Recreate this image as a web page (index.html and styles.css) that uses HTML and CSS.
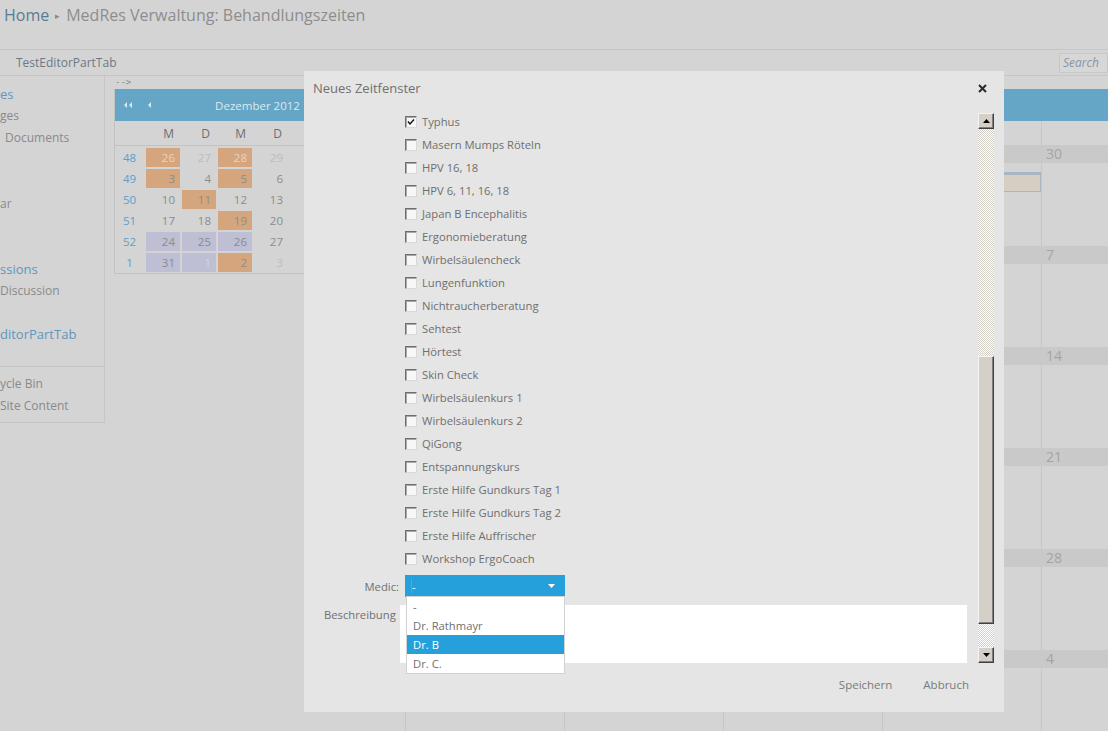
FILE: index.html
```html
<!DOCTYPE html>
<html lang="de">
<head>
<meta charset="utf-8">
<title>MedRes Verwaltung: Behandlungszeiten</title>
<link rel="stylesheet" href="styles.css">
</head>
<body>
<div class="page">
  <header class="topbar">
    <h1 class="crumb"><span class="crumb-home">Home</span><span class="crumb-sep">&#9656;</span><span class="crumb-page">MedRes Verwaltung: Behandlungszeiten</span></h1>
  </header>
  <div class="tabbar">
    <span class="tab">TestEditorPartTab</span>
    <div class="search">Search</div>
  </div>
  <div class="main">
    <nav class="quicklaunch">
      <div class="ql-head first">es</div>
      <div class="ql-item">ges</div>
      <div class="ql-item indent">Documents</div>
      <div class="ql-item gap-lists">ar</div>
      <div class="ql-head gap-disc">ssions</div>
      <div class="ql-item">Discussion</div>
      <div class="ql-head gap-tab">ditorPartTab</div>
      <div class="ql-foot">
        <div class="ql-item">ycle Bin</div>
        <div class="ql-item">Site Content</div>
      </div>
    </nav>
    <div class="content">
      <div class="comment-tail">--&gt;</div>
      <div class="cal-row">
        <div class="minical">
          <div class="mc-head">
            <span class="mc-nav">
              <svg width="9" height="6" viewBox="0 0 9 6"><path d="M0 3L3 0V6Z M5 3L8 0V6Z" fill="#dbe7ef"/></svg>
              <svg class="mc-prev" width="4" height="6" viewBox="0 0 4 6"><path d="M0 3L3 0V6Z" fill="#dbe7ef"/></svg>
            </span>
            <span class="mc-title">Dezember 2012</span>
          </div>
          <div class="mc-grid mc-days">
            <span></span><span>M</span><span>D</span><span>M</span><span>D</span><span>F</span><span>S</span><span>S</span>
          </div>
          <div class="mc-grid mc-weeks">
            <span class="wk">48</span><span class="d o x">26</span><span class="d x">27</span><span class="d o x">28</span><span class="d x">29</span><span class="d x">30</span><span class="d">1</span><span class="d">2</span>
            <span class="wk">49</span><span class="d o">3</span><span class="d">4</span><span class="d o">5</span><span class="d">6</span><span class="d">7</span><span class="d">8</span><span class="d">9</span>
            <span class="wk">50</span><span class="d">10</span><span class="d o">11</span><span class="d">12</span><span class="d">13</span><span class="d">14</span><span class="d">15</span><span class="d">16</span>
            <span class="wk">51</span><span class="d">17</span><span class="d">18</span><span class="d o">19</span><span class="d">20</span><span class="d">21</span><span class="d">22</span><span class="d">23</span>
            <span class="wk">52</span><span class="d l">24</span><span class="d l">25</span><span class="d l">26</span><span class="d">27</span><span class="d">28</span><span class="d">29</span><span class="d">30</span>
            <span class="wk">1</span><span class="d l">31</span><span class="d l x">1</span><span class="d o">2</span><span class="d x">3</span><span class="d x">4</span><span class="d x">5</span><span class="d x">6</span>
          </div>
        </div>
        <div class="monthcal">
          <div class="mo-head"></div>
          <div class="mo-grid mo-names"><span></span><span></span><span></span><span></span><span></span><span></span><span></span></div>
          <div class="mo-week">
            <div class="mo-band"><span>26</span><span>27</span><span>28</span><span>29</span><span>30</span><span>1</span><span>2</span></div>
            <div class="mo-grid mo-body"><span></span><span></span><span></span><span></span><span></span><span></span><span></span></div>
            <div class="mo-event"></div>
          </div>
          <div class="mo-week">
            <div class="mo-band"><span>3</span><span>4</span><span>5</span><span>6</span><span>7</span><span>8</span><span>9</span></div>
            <div class="mo-grid mo-body"><span></span><span></span><span></span><span></span><span></span><span></span><span></span></div>
          </div>
          <div class="mo-week">
            <div class="mo-band"><span>10</span><span>11</span><span>12</span><span>13</span><span>14</span><span>15</span><span>16</span></div>
            <div class="mo-grid mo-body"><span></span><span></span><span></span><span></span><span></span><span></span><span></span></div>
          </div>
          <div class="mo-week">
            <div class="mo-band"><span>17</span><span>18</span><span>19</span><span>20</span><span>21</span><span>22</span><span>23</span></div>
            <div class="mo-grid mo-body"><span></span><span></span><span></span><span></span><span></span><span></span><span></span></div>
          </div>
          <div class="mo-week">
            <div class="mo-band"><span>24</span><span>25</span><span>26</span><span>27</span><span>28</span><span>29</span><span>30</span></div>
            <div class="mo-grid mo-body"><span></span><span></span><span></span><span></span><span></span><span></span><span></span></div>
          </div>
          <div class="mo-week">
            <div class="mo-band"><span>31</span><span>1</span><span>2</span><span>3</span><span>4</span><span>5</span><span>6</span></div>
            <div class="mo-grid mo-body"><span></span><span></span><span></span><span></span><span></span><span></span><span></span></div>
          </div>
        </div>
      </div>
    </div>
  </div>
</div>

<div class="dialog">
  <div class="dlg-head">
    <span class="dlg-title">Neues Zeitfenster</span>
    <svg class="dlg-close" width="9" height="9" viewBox="0 0 9 9"><path d="M1 1L8 8M8 1L1 8" stroke="#2b2b2b" stroke-width="2"/></svg>
  </div>
  <div class="dlg-body">
    <div class="dlg-scroll">
      <ul class="checks">
        <li><span class="cb"><svg width="10" height="10" viewBox="0 0 10 10"><path d="M2 4.5L4 7L8 2.5" fill="none" stroke="#111" stroke-width="1.4"/></svg></span>Typhus</li>
        <li><span class="cb"></span>Masern Mumps Röteln</li>
        <li><span class="cb"></span>HPV 16, 18</li>
        <li><span class="cb"></span>HPV 6, 11, 16, 18</li>
        <li><span class="cb"></span>Japan B Encephalitis</li>
        <li><span class="cb"></span>Ergonomieberatung</li>
        <li><span class="cb"></span>Wirbelsäulencheck</li>
        <li><span class="cb"></span>Lungenfunktion</li>
        <li><span class="cb"></span>Nichtraucherberatung</li>
        <li><span class="cb"></span>Sehtest</li>
        <li><span class="cb"></span>Hörtest</li>
        <li><span class="cb"></span>Skin Check</li>
        <li><span class="cb"></span>Wirbelsäulenkurs 1</li>
        <li><span class="cb"></span>Wirbelsäulenkurs 2</li>
        <li><span class="cb"></span>QiGong</li>
        <li><span class="cb"></span>Entspannungskurs</li>
        <li><span class="cb"></span>Erste Hilfe Gundkurs Tag 1</li>
        <li><span class="cb"></span>Erste Hilfe Gundkurs Tag 2</li>
        <li><span class="cb"></span>Erste Hilfe Auffrischer</li>
        <li><span class="cb"></span>Workshop ErgoCoach</li>
      </ul>
      <div class="field medic">
        <label class="medic-label">Medic:</label>
        <div class="select"><span class="caret"></span><span class="sel-value">-</span>
          <svg class="sel-arrow" width="7" height="4" viewBox="0 0 7 4"><path d="M0 0H7L3.5 4Z" fill="#fff"/></svg>
        </div>
      </div>
      <div class="field desc">
        <label class="desc-label">Beschreibung</label>
        <div class="textarea"></div>
      </div>
    </div>
    <div class="scrollbar">
      <div class="sb-btn"><svg width="7" height="4" viewBox="0 0 7 4"><path d="M3.5 0L7 4H0Z" fill="#000"/></svg></div>
      <div class="sb-track sb-track-top"></div>
      <div class="sb-thumb"></div>
      <div class="sb-track sb-track-bottom"></div>
      <div class="sb-btn"><svg width="7" height="4" viewBox="0 0 7 4"><path d="M0 0H7L3.5 4Z" fill="#000"/></svg></div>
    </div>
  </div>
  <div class="dlg-foot">
    <span class="dlg-btn">Speichern</span>
    <span class="dlg-btn">Abbruch</span>
  </div>
  <ul class="sel-list">
    <li>-</li>
    <li>Dr. Rathmayr</li>
    <li class="active">Dr. B</li>
    <li>Dr. C.</li>
  </ul>
</div>
</body>
</html>
```
FILE: styles.css
```css
html, body {
  margin: 0;
  padding: 0;
}

body {
  width: 1108px;
  height: 731px;
  overflow: hidden;
  position: relative;
  background: #d4d4d4;
  font-family: "Open Sans", "Noto Sans", sans-serif;
  color: #8a8a8a;
}

/* ---------- page behind the modal (shaded) ---------- */

.topbar {
  height: 49px;
  border-bottom: 1px solid #c6c6c6;
}

.crumb {
  margin: 0;
  padding: 3px 0 0 4px;
  font-size: 16px;
  font-weight: 400;
  line-height: 24px;
  white-space: nowrap;
}

.crumb-home {
  color: #5b7b95;
}

.crumb-sep {
  font-size: 9px;
  color: #8a8a8a;
  margin: 0 6px 0 6px;
  vertical-align: 2px;
}

.crumb-page {
  color: #8d8d8d;
}

.tabbar {
  height: 25px;
  border-bottom: 1px solid #c6c6c6;
  display: flex;
  align-items: center;
  justify-content: space-between;
}

.tab {
  padding-left: 16px;
  font-size: 12px;
  color: #6c7986;
}

.search {
  width: 44px;
  height: 18px;
  border: 1px solid #c8c8c8;
  background: #d7d7d7;
  font-size: 12px;
  font-style: italic;
  line-height: 18px;
  color: #8896a4;
  padding-left: 3px;
  overflow: hidden;
  white-space: nowrap;
}

.main {
  display: flex;
}

.quicklaunch {
  flex: none;
  width: 104px;
  height: 346px;
  border-right: 1px solid #c6c6c6;
  border-bottom: 1px solid #c6c6c6;
  font-size: 12px;
  white-space: nowrap;
  overflow: hidden;
}

.ql-head {
  font-size: 13px;
  line-height: 22px;
  color: #5d97bf;
}

.ql-head.first {
  margin-top: 7px;
}

.ql-item {
  line-height: 22px;
  color: #8a8a8a;
}

.ql-item.indent {
  padding-left: 5px;
}

.ql-item.gap-lists {
  margin-top: 44px;
}

.ql-head.gap-disc {
  margin-top: 43px;
}

.ql-head.gap-tab {
  margin-top: 21px;
}

.ql-foot {
  margin-top: 21px;
  border-top: 1px solid #c6c6c6;
  padding-top: 6px;
}

.content {
  margin-left: 9px;
  flex: 1;
  min-width: 0;
}

.comment-tail {
  height: 13px;
  font-family: "DejaVu Sans Mono", monospace;
  font-size: 9px;
  line-height: 13px;
  color: #8a8a8a;
  padding-left: 1px;
}

.cal-row {
  display: flex;
  align-items: flex-start;
  gap: 10px;
}

/* small month navigator */

.minical {
  flex: none;
  width: 279px;
  border: 1px solid #c2c2c2;
  border-top: none;
  font-size: 11.5px;
}

.mc-head {
  height: 32px;
  background: #65a5c5;
  position: relative;
  display: flex;
  align-items: center;
  justify-content: center;
}

.mc-nav {
  position: absolute;
  left: 9px;
  top: 13px;
  display: flex;
  gap: 15px;
}

.mc-nav svg {
  display: block;
}

.mc-title {
  color: #dfe8ef;
  font-size: 11.5px;
  padding-left: 6px;
}

.mc-grid {
  display: grid;
  grid-template-columns: 29px repeat(7, 34px);
  column-gap: 2px;
}

.mc-days {
  height: 24px;
  border-bottom: 1px solid #c2c2c2;
  align-items: center;
  color: #6e6e6e;
  font-size: 12px;
}

.mc-days span {
  text-align: right;
  padding-right: 6px;
}

.mc-weeks {
  row-gap: 2px;
  padding: 2px 0 1px;
  grid-auto-rows: 19px;
}

.mc-weeks span {
  line-height: 19px;
}

.wk {
  text-align: center;
  color: #5ba0c8;
}

.d {
  text-align: right;
  padding-right: 5px;
  color: #8c8c8c;
}

.d.x {
  color: #bdbdbd;
}

.d.o {
  background: #d5a67e;
}

.d.o.x {
  color: #ead3c0;
}

.d.l {
  background: #bebed5;
}

.d.l.x {
  color: #d6d6e6;
}

/* month view */

.monthcal {
  flex: none;
  width: 1113px;
  border-left: 1px solid #c6c6c6;
}

.mo-head {
  height: 32px;
  background: #65a5c5;
}

.mo-grid {
  display: grid;
  grid-template-columns: repeat(7, 159px);
}

.mo-grid span {
  border-right: 1px solid #c6c6c6;
}

.mo-names {
  height: 24px;
}

.mo-week {
  height: 101px;
  display: flex;
  flex-direction: column;
  position: relative;
}

.mo-band {
  height: 18px;
  background: #c9c9c9;
  display: grid;
  grid-template-columns: repeat(7, 159px);
  font-size: 14px;
  line-height: 18px;
  color: #a4a4a4;
}

.mo-band span {
  padding-left: 4px;
}

.mo-body {
  flex: 1;
}

.mo-event {
  position: absolute;
  left: 2px;
  top: 27px;
  width: 631px;
  height: 16px;
  background: #d6cec2;
  border: 1px solid #a9b5c3;
  border-top-width: 3px;
}

/* ---------- modal dialog ---------- */

.dialog {
  position: absolute;
  left: 304px;
  top: 71px;
  width: 700px;
  height: 641px;
  background: #e5e5e5;
  display: flex;
  flex-direction: column;
  font-size: 11.25px;
  color: #6f6f6f;
}

.dlg-head {
  height: 42px;
  display: flex;
  align-items: flex-start;
  justify-content: space-between;
  padding: 7px 17px 0 9px;
  box-sizing: border-box;
}

.dlg-title {
  font-size: 13px;
  line-height: 20px;
  color: #707070;
}

.dlg-close {
  margin-top: 6px;
}

.dlg-body {
  height: 550px;
  display: flex;
  padding-right: 10px;
}

.dlg-scroll {
  flex: 1;
  overflow: hidden;
}

.checks {
  list-style: none;
  margin: -3px 0 0;
  padding: 0 0 0 101px;
}

.checks li {
  height: 23px;
  display: flex;
  align-items: center;
  white-space: nowrap;
}

.cb {
  width: 10px;
  height: 10px;
  margin-right: 5px;
  background: #f7f7f7;
  border: 1px solid;
  border-color: #6e6e6e #d8d8d8 #d8d8d8 #6e6e6e;
  box-shadow: inset 1px 1px 0 #a8a8a8;
  display: flex;
  align-items: center;
  justify-content: center;
}

.cb svg {
  display: block;
}

.field {
  display: flex;
}

.medic {
  margin-top: 5px;
  height: 22px;
  align-items: center;
}

.medic-label {
  width: 95px;
  text-align: right;
  margin-right: 6px;
  color: #707070;
}

.select {
  width: 160px;
  height: 22px;
  background: #26a0da;
  color: #fff;
  display: flex;
  align-items: center;
  padding-left: 6px;
  box-sizing: border-box;
  position: relative;
}

.caret {
  width: 1px;
  height: 14px;
  background: #f07a2a;
}

.sel-arrow {
  position: absolute;
  right: 10px;
  top: 9px;
}

.desc {
  margin-top: 8px;
}

.desc-label {
  width: 76px;
  padding-left: 20px;
  line-height: 20px;
  color: #707070;
}

.textarea {
  width: 567px;
  height: 58px;
  background: #fff;
}

/* classic scrollbar */

.scrollbar {
  width: 16px;
  display: flex;
  flex-direction: column;
}

.sb-btn {
  height: 16px;
  box-sizing: border-box;
  background: #d4d0c8;
  border: 1px solid;
  border-color: #f4f4f4 #404040 #404040 #f4f4f4;
  box-shadow: inset -1px -1px 0 #808080;
  display: flex;
  align-items: center;
  justify-content: center;
}

.sb-btn svg {
  display: block;
}

.sb-track {
  background-color: #ffffff;
  background-image: repeating-conic-gradient(#d4d0c8 0 25%, #ffffff 0 50%);
  background-size: 2px 2px;
}

.sb-track-top {
  height: 227px;
}

.sb-track-bottom {
  flex: 1;
}

.sb-thumb {
  height: 268px;
  box-sizing: border-box;
  background: #d4d0c8;
  border: 1px solid;
  border-color: #f4f4f4 #404040 #404040 #f4f4f4;
  box-shadow: inset -1px -1px 0 #808080;
}

.dlg-foot {
  flex: 1;
  display: flex;
  justify-content: flex-end;
  align-items: flex-start;
  gap: 31px;
  padding: 12px 35px 0 0;
}

.dlg-btn {
  font-size: 11.5px;
  line-height: 20px;
  color: #7a7a7a;
}

/* open dropdown of the select */

.sel-list {
  position: absolute;
  left: 102px;
  top: 525px;
  width: 157px;
  margin: 0;
  padding: 0;
  list-style: none;
  background: #fff;
  border: 1px solid #d2d2d2;
}

.sel-list li {
  height: 19px;
  line-height: 19px;
  padding-left: 6px;
  color: #707070;
}

.sel-list li.active {
  background: #26a0da;
  color: #fff;
}
```
